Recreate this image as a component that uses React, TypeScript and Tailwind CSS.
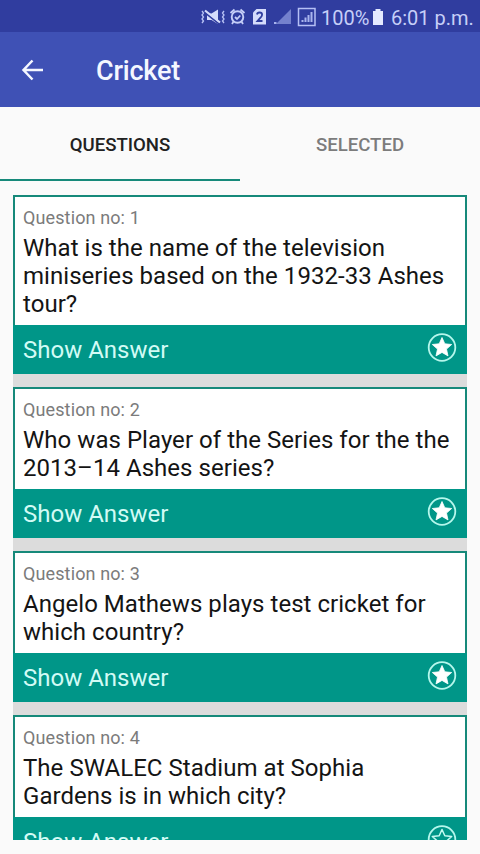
import { useState } from 'react';

type Question = {
  id: number;
  lines: string[];
  starred: boolean;
};

const questions: Question[] = [
  {
    id: 1,
    lines: ['What is the name of the television', 'miniseries based on the 1932-33 Ashes', 'tour?'],
    starred: true,
  },
  { id: 2, lines: ['Who was Player of the Series for the the', '2013–14 Ashes series?'], starred: true },
  { id: 3, lines: ['Angelo Mathews plays test cricket for', 'which country?'], starred: true },
  { id: 4, lines: ['The SWALEC Stadium at Sophia', 'Gardens is in which city?'], starred: false },
];

const tabs = [
  { key: 'questions' as const, label: 'QUESTIONS' },
  { key: 'selected' as const, label: 'SELECTED' },
];

function StatusIcons() {
  return (
    <svg width="117" height="20" viewBox="0 0 117 20" fill="none" className="mt-0.5 shrink-0">
      {/* vibrate / mute */}
      <path d="M2 4l1.500 2L2 8l1.500 2L2 12l1.500 2L2 16M24 4l-1.500 2L24 8l-1.500 2L24 12l-1.500 2L24 16" stroke="#b9c3f5" strokeWidth="1.300" />
      <path d="M7 6.500h4.500L18 2.500v14.500l-6.500-4H7z" fill="#d5dcfb" />
      <path d="M5 5.500l15 12" stroke="#303d9f" strokeWidth="2" />
      <path d="M5 3.500l15 12" stroke="#d5dcfb" strokeWidth="2.200" />
      {/* alarm */}
      <circle cx="37.500" cy="10" r="5.800" stroke="#c5cef8" strokeWidth="1.900" />
      <path d="M30.500 6l4-3.500M44.500 6l-4-3.500M33.500 14.500l-1.500 2.500M41.500 14.500l1.500 2.500M35 10l2 2 3.300-3.500" stroke="#c5cef8" strokeWidth="1.800" />
      {/* sim 2 */}
      <path d="M56.500 2H66v15.500H53V5.500z" fill="#d5dcfb" />
      <path d="M57 7.500q.3-2 2.500-2 2.600 0 2.600 2.300 0 1.400-1.900 3.200L57.500 14h5" stroke="#303f9f" strokeWidth="1.800" />
      {/* first signal */}
      <path d="M91 2v15H76z" fill="#7481cd" />
      <path d="M74 15h2.500v2H74z" fill="#a9b4ee" />
      {/* boxed signal */}
      <path d="M98.500 1.500h16.500V18.500H98.500z" stroke="#b5c0f5" strokeWidth="1.500" />
      <path d="M102.500 15v-2M105.500 15v-4.500M108.500 15V8M111.500 15V5" stroke="#a9b5ee" strokeWidth="2" />
    </svg>
  );
}

function StarButton({ starred, onClick }: { starred: boolean; onClick: () => void }) {
  return (
    <button type="button" onClick={onClick} className="mt-[7px] h-[30px] w-[30px] shrink-0">
      <svg width="30" height="30" viewBox="0 0 30 30">
        <circle cx="15" cy="15.500" r="13.300" fill="none" stroke="#b5f7ec" strokeWidth="1.800" />
        <path
          d="M15 5.500l2.800 6.300 6.900.7-5.200 4.600 1.500 6.800L15 20.400l-6 3.500 1.500-6.800-5.200-4.600 6.900-.7z"
          fill={starred ? '#ffffff' : 'none'}
          stroke={starred ? '#ffffff' : '#c4faf1'}
          strokeWidth={starred ? 0.8 : 1.5}
          strokeLinejoin="round"
        />
      </svg>
    </button>
  );
}

function QuestionCard({ question, onToggle }: { question: Question; onToggle: () => void }) {
  return (
    <div className="shrink-0">
      <div className="border-2 border-b-0 border-[#16897a] bg-white pb-[7px] pl-2 pt-2.5">
        <p className="h-[27px] text-[18px] leading-[22px] tracking-[0.12px] text-[#7b7b7b]">
          Question no: {question.id}
        </p>
        {question.lines.map((line) => (
          <p key={line} className="h-7 whitespace-nowrap text-[24px] leading-7 tracking-[0.04px] text-[#141414]">
            {line}
          </p>
        ))}
      </div>
      <div className="flex h-[49px] justify-between bg-[#009688] pl-2.5 pr-2.5">
        <button type="button" className="h-[49px] pt-px text-[24px] leading-[49px] text-[#d2fbf5]">
          Show Answer
        </button>
        <StarButton starred={question.starred} onClick={onToggle} />
      </div>
    </div>
  );
}

export default function App() {
  const [activeTab, setActiveTab] = useState<'questions' | 'selected'>('questions');
  const [items, setItems] = useState(questions);

  const toggleStar = (id: number) => {
    setItems(items.map((item) => (item.id === id ? { ...item, starred: !item.starred } : item)));
  };

  const visible = activeTab === 'questions' ? items : items.filter((item) => item.starred);

  return (
    <div className="flex h-[854px] w-[480px] flex-col overflow-hidden bg-[#fafafa] font-[Roboto,sans-serif]">
      <div className="flex h-8 shrink-0 items-center bg-[#303d9f] pl-[200px] text-[#c6cff8]">
        <StatusIcons />
        <span className="ml-1 w-[50px] whitespace-nowrap pt-[3px] text-[20px]">100%</span>
        <svg width="12" height="18" viewBox="0 0 12 18" className="ml-px mt-0.5 shrink-0">
          <path d="M3.500 1h5v2H11v14H1V3h2.500z" fill="#e4e9ff" />
        </svg>
        <span className="ml-[7px] whitespace-nowrap pt-[3px] text-[20px]">6:01 p.m.</span>
      </div>

      <header className="flex h-[75px] shrink-0 items-center bg-[#3f51b5] pl-5 text-[#f4f7ff]">
        <button type="button" aria-label="Back">
          <svg width="24" height="24" viewBox="0 0 24 24" fill="none" stroke="currentColor" strokeWidth="2.500">
            <path d="M23 12H3.500M12.500 2.500L3.500 12l9 9.500" />
          </svg>
        </button>
        <h1 className="ml-[52px] pt-[3px] text-[27px] font-medium leading-8 tracking-[-0.2px]">Cricket</h1>
      </header>

      <nav className="flex h-[74px] shrink-0">
        {tabs.map((tab) => (
          <button
            key={tab.key}
            type="button"
            onClick={() => setActiveTab(tab.key)}
            className={`flex-1 border-b-2 pt-1.5 text-[18.600px] font-medium ${
              activeTab === tab.key ? 'border-[#16897a] text-[#212121]' : 'border-transparent text-[#7c7c7c]'
            }`}
          >
            {tab.label}
          </button>
        ))}
      </nav>

      <main className="mx-[13px] mt-3.5 h-[645px] shrink-0 overflow-hidden">
        <div className="flex flex-col gap-[13px] bg-[#dcdcdc]">
          {visible.map((question) => (
            <QuestionCard key={question.id} question={question} onToggle={() => toggleStar(question.id)} />
          ))}
        </div>
      </main>
    </div>
  );
}
